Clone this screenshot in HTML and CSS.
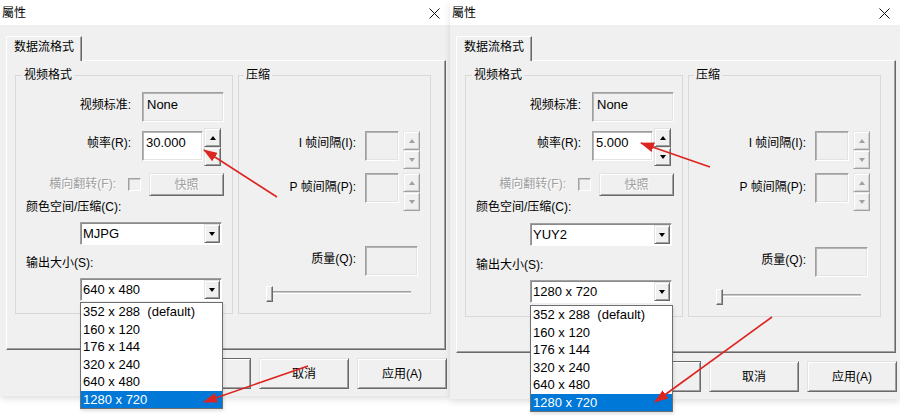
FILE: index.html
```html
<!DOCTYPE html>
<html lang="zh-CN">
<head>
<meta charset="utf-8">
<title>屬性</title>
<link rel="stylesheet" href="styles.css">
</head>
<body>
<div class="screen">

  <section class="dlg">
    <header class="titlebar">
      <span class="title">屬性</span>
      <svg class="close" width="11" height="11" viewBox="0 0 11 11"><path d="M0.5 0.5L10.5 10.5M10.5 0.5L0.5 10.5" stroke="#111" stroke-width="1"/></svg>
    </header>
    <div class="dlg-body">
      <div class="tabs"><div class="tab">数据流格式</div></div>
      <div class="panel">
        <fieldset class="group group-video">
          <legend>视频格式</legend>
          <div class="row row-std">
            <span class="lbl lbl-a">视频标准:</span>
            <div class="static">None</div>
          </div>
          <div class="row row-fps">
            <span class="lbl lbl-a">帧率(R):</span>
            <div class="edit edit-fps">30.000</div>
            <div class="spin"><span class="spin-btn"><i class="tri-up"></i></span><span class="spin-btn"><i class="tri-down"></i></span></div>
          </div>
          <div class="row row-flip">
            <span class="lbl lbl-b disabled">横向翻转(F):</span>
            <span class="check"></span>
            <span class="btn btn-snap disabled">快照</span>
          </div>
          <div class="cap cap-color">颜色空间/压缩(C):</div>
          <div class="combo combo-color"><span class="combo-val">MJPG</span><span class="combo-arrow"><i class="tri-down"></i></span></div>
          <div class="cap cap-size">输出大小(S):</div>
          <div class="combo combo-size"><span class="combo-val">640 x 480</span><span class="combo-arrow"><i class="tri-down"></i></span>
            <ul class="list">
              <li>352 x 288  (default)</li>
              <li>160 x 120</li>
              <li>176 x 144</li>
              <li>320 x 240</li>
              <li>640 x 480</li>
              <li class="sel">1280 x 720</li>
            </ul>
          </div>
        </fieldset>
        <fieldset class="group group-comp">
          <legend>压缩</legend>
          <div class="row row-i">
            <span class="lbl lbl-c">I 帧间隔(I):</span>
            <div class="edit edit-dis"></div>
            <div class="spin spin-dis"><span class="spin-btn"><i class="tri-up"></i></span><span class="spin-btn"><i class="tri-down"></i></span></div>
          </div>
          <div class="row row-p">
            <span class="lbl lbl-c lbl-p">P 帧间隔(P):</span>
            <div class="edit edit-dis"></div>
            <div class="spin spin-dis"><span class="spin-btn"><i class="tri-up"></i></span><span class="spin-btn"><i class="tri-down"></i></span></div>
          </div>
          <div class="row row-q">
            <span class="lbl lbl-c">质量(Q):</span>
            <div class="edit edit-dis edit-q"></div>
          </div>
          <div class="slider"><span class="thumb"></span></div>
        </fieldset>
      </div>
      <div class="buttons">
        <span class="btn btn-wide btn-default">确定</span>
        <span class="btn btn-wide">取消</span>
        <span class="btn btn-wide">应用(A)</span>
      </div>
    </div>
  </section>

  <section class="dlg dlg-b">
    <header class="titlebar">
      <span class="title">屬性</span>
      <svg class="close" width="11" height="11" viewBox="0 0 11 11"><path d="M0.5 0.5L10.5 10.5M10.5 0.5L0.5 10.5" stroke="#111" stroke-width="1"/></svg>
    </header>
    <div class="dlg-body">
      <div class="tabs"><div class="tab">数据流格式</div></div>
      <div class="panel">
        <fieldset class="group group-video">
          <legend>视频格式</legend>
          <div class="row row-std">
            <span class="lbl lbl-a">视频标准:</span>
            <div class="static">None</div>
          </div>
          <div class="row row-fps">
            <span class="lbl lbl-a">帧率(R):</span>
            <div class="edit edit-fps">5.000</div>
            <div class="spin"><span class="spin-btn"><i class="tri-up"></i></span><span class="spin-btn"><i class="tri-down"></i></span></div>
          </div>
          <div class="row row-flip">
            <span class="lbl lbl-b disabled">横向翻转(F):</span>
            <span class="check"></span>
            <span class="btn btn-snap disabled">快照</span>
          </div>
          <div class="cap cap-color">颜色空间/压缩(C):</div>
          <div class="combo combo-color"><span class="combo-val">YUY2</span><span class="combo-arrow"><i class="tri-down"></i></span></div>
          <div class="cap cap-size">输出大小(S):</div>
          <div class="combo combo-size"><span class="combo-val">1280 x 720</span><span class="combo-arrow"><i class="tri-down"></i></span>
            <ul class="list">
              <li>352 x 288  (default)</li>
              <li>160 x 120</li>
              <li>176 x 144</li>
              <li>320 x 240</li>
              <li>640 x 480</li>
              <li class="sel">1280 x 720</li>
            </ul>
          </div>
        </fieldset>
        <fieldset class="group group-comp">
          <legend>压缩</legend>
          <div class="row row-i">
            <span class="lbl lbl-c">I 帧间隔(I):</span>
            <div class="edit edit-dis"></div>
            <div class="spin spin-dis"><span class="spin-btn"><i class="tri-up"></i></span><span class="spin-btn"><i class="tri-down"></i></span></div>
          </div>
          <div class="row row-p">
            <span class="lbl lbl-c lbl-p">P 帧间隔(P):</span>
            <div class="edit edit-dis"></div>
            <div class="spin spin-dis"><span class="spin-btn"><i class="tri-up"></i></span><span class="spin-btn"><i class="tri-down"></i></span></div>
          </div>
          <div class="row row-q">
            <span class="lbl lbl-c">质量(Q):</span>
            <div class="edit edit-dis edit-q"></div>
          </div>
          <div class="slider"><span class="thumb"></span></div>
        </fieldset>
      </div>
      <div class="buttons">
        <span class="btn btn-wide btn-default">确定</span>
        <span class="btn btn-wide">取消</span>
        <span class="btn btn-wide">应用(A)</span>
      </div>
    </div>
  </section>

  <svg class="arrows" width="900" height="419" viewBox="0 0 900 419">
    <defs>
      <marker id="ah" markerUnits="userSpaceOnUse" markerWidth="14" markerHeight="10" refX="13" refY="5" orient="auto">
        <path d="M0,0 L14,5 L0,10 z" fill="#dc2420"/>
      </marker>
    </defs>
    <line x1="277" y1="197" x2="204" y2="150" stroke="#dc2420" stroke-width="1.6" marker-end="url(#ah)"/>
    <line x1="308" y1="366" x2="204" y2="402" stroke="#dc2420" stroke-width="1.6" marker-end="url(#ah)"/>
    <line x1="710" y1="167" x2="641" y2="143" stroke="#dc2420" stroke-width="1.6" marker-end="url(#ah)"/>
    <line x1="772" y1="317" x2="655" y2="402" stroke="#dc2420" stroke-width="1.6" marker-end="url(#ah)"/>
  </svg>
</div>
</body>
</html>
```
FILE: styles.css
```css
* { box-sizing: border-box; }
html, body { margin: 0; padding: 0; }
body {
  width: 900px;
  height: 419px;
  overflow: hidden;
  background: #fff;
  font-family: "Liberation Sans", "Noto Sans CJK SC", sans-serif;
  font-size: 12px;
  color: #000;
}
.screen {
  position: relative;
  display: flex;
  align-items: flex-start;
  width: 900px;
  height: 419px;
}
.dlg {
  width: 450px;
  flex: none;
  display: flex;
  flex-direction: column;
  box-shadow: 0 3px 6px rgba(0, 0, 0, 0.12);
}
.titlebar {
  height: 25px;
  background: #fff;
  display: flex;
  align-items: center;
  justify-content: space-between;
  padding: 0 10px 0 2px;
}
.title { font-size: 12px; line-height: 16px; }
.close { display: block; margin-top: 1px; }

.dlg-body {
  background: #f0f0f0;
  padding: 11px 3px 7px 6px;
}

/* tab */
.tabs { display: flex; }
.tab {
  position: relative;
  z-index: 1;
  height: 25px;
  margin-bottom: -1px;
  padding: 2px 7px 6px;
  line-height: 16px;
  background: #f0f0f0;
  border: 1px solid;
  border-bottom: 0;
  border-color: #fff #696969 transparent #fff;
  box-shadow: inset -1px 0 #a0a0a0;
}
.panel {
  width: 440px;
  display: flex;
  gap: 5px;
  padding: 6px 0 35px 8px;
  border: 1px solid;
  border-color: #fff #696969 #696969 #fff;
  box-shadow: inset -1px -1px #a0a0a0;
}

/* group boxes */
.group {
  margin: 0;
  padding: 9px 0 11px 0;
  border: 1px solid #d9d9d9;
  min-width: 0;
  display: flex;
  flex-direction: column;
  align-items: flex-start;
}
.group legend {
  font-size: 12px;
  line-height: 16px;
  padding: 0 2px;
  margin-left: 6px;
}
.group-video { width: 218px; }
.group-comp { width: 193px; }
.group-comp legend { margin-left: 5px; }

.row { display: flex; align-items: flex-start; flex: none; }
.lbl {
  flex: none;
  line-height: 16px;
  text-align: right;
  white-space: nowrap;
}
.disabled { color: #a0a0a0; text-shadow: 1px 1px 0 #fff; }

.lbl-a { width: 115px; }
.lbl-b { width: 100px; margin-top: 3px; }
.lbl-c { width: 117px; margin-top: 4px; }

.row-std .lbl { margin-top: 5px; }
.row-std .static { margin-left: 11px; }

.static, .edit {
  flex: none;
  height: 30px;
  font-size: 13px;
  line-height: 16px;
  border: 1px solid;
  border-color: #a0a0a0 #fff #fff #a0a0a0;
  box-shadow: inset 1px 1px 0 #b4b4b4, inset -1px -1px 0 #e3e3e3;
}
.static {
  width: 82px;
  padding: 4px 0 0 4px;
  background: #f0f0f0;
}

.row-fps { margin-top: 6px; height: 38px; }
.row-fps .lbl { margin-top: 7px; }
.edit-fps {
  width: 61px;
  margin: 3px 0 0 11px;
  padding: 3px 0 0 3px;
  background: #fff;
}

.spin {
  flex: none;
  display: flex;
  flex-direction: column;
  width: 17px;
  margin-left: 1px;
}
.spin-btn {
  height: 19px;
  display: flex;
  align-items: center;
  justify-content: center;
  background: #f0f0f0;
  border: 1px solid;
  border-color: #e3e3e3 #696969 #696969 #e3e3e3;
  box-shadow: inset 1px 1px 0 #fff, inset -1px -1px 0 #a0a0a0;
}
.tri-up, .tri-down {
  display: block;
  width: 0;
  height: 0;
  border-left: 3.5px solid transparent;
  border-right: 3.5px solid transparent;
}
.tri-up { border-bottom: 4px solid #000; }
.tri-down { border-top: 4px solid #000; }
.spin-dis .tri-up { border-bottom-color: #a0a0a0; }
.spin-dis .tri-down { border-top-color: #a0a0a0; }
.spin-dis .spin-btn {
  border-color: #e8e8e8 #a0a0a0 #a0a0a0 #e8e8e8;
  box-shadow: inset 1px 1px 0 #fff, inset -1px -1px 0 #d0d0d0;
}

.row-flip { margin-top: 7px; height: 23px; }
.check {
  flex: none;
  width: 13px;
  height: 13px;
  margin: 5px 0 0 12px;
  border: 1px solid;
  border-color: #a0a0a0 #fff #fff #a0a0a0;
  box-shadow: inset 1px 1px 0 #c8c8c8;
  background: #f0f0f0;
}

.btn {
  flex: none;
  display: flex;
  align-items: center;
  justify-content: center;
  line-height: 16px;
  background: #f0f0f0;
  border: 1px solid;
  border-color: #e3e3e3 #696969 #696969 #e3e3e3;
  box-shadow: inset 1px 1px 0 #fff, inset -1px -1px 0 #a0a0a0;
}
.btn-snap {
  width: 75px;
  height: 23px;
  margin-left: 8px;
}

.cap {
  flex: none;
  line-height: 16px;
  margin-left: 10px;
}
.cap-color { margin-top: 3px; }
.cap-size { margin-top: 10px; }

.combo {
  position: relative;
  flex: none;
  display: flex;
  align-items: center;
  width: 142px;
  height: 23px;
  margin-left: 64px;
  padding: 0 1px 0 2px;
  font-size: 13px;
  background: #fff;
  border: 1px solid;
  border-color: #a0a0a0 #fff #fff #a0a0a0;
  box-shadow: inset 1px 1px 0 #8a8a8a;
}
.combo-color { margin-top: 7px; }
.combo-size { margin-top: 7px; }
.combo-val { flex: 1; line-height: 16px; }
.combo-arrow {
  flex: none;
  width: 16px;
  height: 19px;
  display: flex;
  align-items: center;
  justify-content: center;
  background: #f0f0f0;
  border: 1px solid;
  border-color: #e3e3e3 #696969 #696969 #e3e3e3;
  box-shadow: inset 1px 1px 0 #fff, inset -1px -1px 0 #a0a0a0;
}

/* open drop-down list (overlays the dialog) */
.list {
  position: absolute;
  left: -1px;
  top: calc(100% + 2px);
  z-index: 5;
  width: 143px;
  margin: 0;
  padding: 0;
  list-style: none;
  background: #fff;
  border: 1px solid #6e6e6e;
  box-shadow: 1px 2px 3px rgba(0, 0, 0, 0.12);
}
.list li {
  height: 17.5px;
  line-height: 17.5px;
  padding-left: 2px;
  white-space: pre;
}
.list li.sel { background: #0078d7; color: #fff; }

/* compression group */
.edit-dis {
  width: 34px;
  margin-left: 9px;
  background: #f0f0f0;
}
.row-i, .row-p { height: 38px; }
.row-i { margin-top: 39px; }
.row-p { margin-top: 4px; }
.row-p .lbl { margin-top: 6px; }
.row .spin-dis { margin-left: 4px; }
.row-q { margin-top: 35px; height: 30px; }
.row-q .lbl { margin-top: 5px; }
.edit-q { width: 53px; }

.slider {
  flex: none;
  width: 145px;
  height: 16px;
  margin: 10px 0 0 27px;
  background: linear-gradient(to bottom,
    transparent 5px, #a0a0a0 5px, #a0a0a0 6px,
    #c9c9c9 6px, #c9c9c9 7px, #fff 7px, #fff 8px, transparent 8px);
}
.thumb {
  display: block;
  width: 7px;
  height: 16px;
  background: #f0f0f0;
  border: 1px solid;
  border-color: #fff #696969 #696969 #fff;
  box-shadow: inset -1px -1px 0 #a0a0a0;
}

/* bottom buttons */
.buttons {
  display: flex;
  justify-content: flex-end;
  gap: 8px;
  margin-top: 8px;
}
.btn-wide { width: 90px; height: 31px; }
.btn-default { border-color: #696969; }

/* second screenshot is a few pixels taller in its lower half */
.dlg-b .combo-color { margin-top: 8px; }
.dlg-b .cap-size { margin-top: 11px; }
.dlg-b .group-video { padding-bottom: 12px; }
.dlg-b .panel { padding-bottom: 35px; }
.dlg-b .row-q { margin-top: 36px; }
.dlg-b .slider { margin-top: 12px; }
.dlg-b .list { top: calc(100% + 3px); }

.arrows {
  position: absolute;
  left: 0;
  top: 0;
  z-index: 10;
  pointer-events: none;
}
```
